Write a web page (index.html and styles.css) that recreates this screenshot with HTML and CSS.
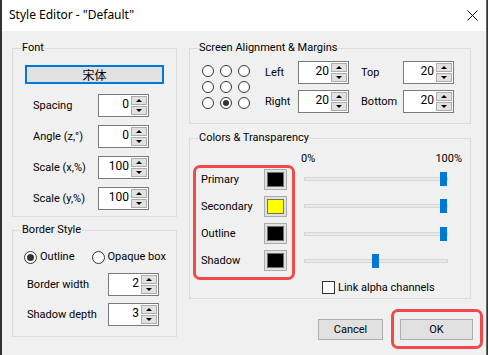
FILE: index.html
```html
<!DOCTYPE html>
<html lang="en">
<head>
  <meta charset="UTF-8">
  <title>Style Editor</title>
  <link rel="stylesheet" href="styles.css">
</head>
<body>
  <div class="window">
    <!-- Title bar -->
    <div class="titlebar">
      <span class="title">Style Editor - "Default"</span>
      <svg class="close" width="11" height="11" viewBox="0 0 11 11">
        <path d="M0.5 0.5 L10.5 10.5 M10.5 0.5 L0.5 10.5" stroke="#000" stroke-width="1" fill="none"/>
      </svg>
    </div>

    <div class="client">
      <!-- Left column -->
      <div class="col-left">
        <fieldset class="group font-group">
          <legend>Font</legend>
          <div class="group-body">
            <button class="font-btn">宋体</button>
            <div class="rows">
              <div class="row"><span class="lbl">Spacing</span><div class="spin"><span class="val">0</span><div class="arrows"><span class="up"></span><span class="down"></span></div></div></div>
              <div class="row"><span class="lbl">Angle (z,°)</span><div class="spin"><span class="val">0</span><div class="arrows"><span class="up"></span><span class="down"></span></div></div></div>
              <div class="row"><span class="lbl">Scale (x,%)</span><div class="spin"><span class="val">100</span><div class="arrows"><span class="up"></span><span class="down"></span></div></div></div>
              <div class="row"><span class="lbl">Scale (y,%)</span><div class="spin"><span class="val">100</span><div class="arrows"><span class="up"></span><span class="down"></span></div></div></div>
            </div>
          </div>
        </fieldset>

        <fieldset class="group border-group">
          <legend>Border Style</legend>
          <div class="group-body">
            <div class="radio-row">
              <span class="radio checked"></span><span class="radio-text">Outline</span>
              <span class="radio"></span><span class="radio-text">Opaque box</span>
            </div>
            <div class="rows">
              <div class="row"><span class="lbl">Border width</span><div class="spin"><span class="val">2</span><div class="arrows"><span class="up"></span><span class="down"></span></div></div></div>
              <div class="row"><span class="lbl">Shadow depth</span><div class="spin"><span class="val">3</span><div class="arrows"><span class="up"></span><span class="down"></span></div></div></div>
            </div>
          </div>
        </fieldset>
      </div>

      <!-- Right column -->
      <div class="col-right">
        <fieldset class="group align-group">
          <legend>Screen Alignment &amp; Margins</legend>
          <div class="group-body align-body">
            <div class="pos-grid">
              <span class="radio"></span><span class="radio"></span><span class="radio"></span>
              <span class="radio"></span><span class="radio"></span><span class="radio"></span>
              <span class="radio"></span><span class="radio checked"></span><span class="radio"></span>
            </div>
            <div class="margins">
              <span class="lbl">Left</span>
              <div class="spin"><span class="val">20</span><div class="arrows"><span class="up"></span><span class="down"></span></div></div>
              <span class="lbl">Top</span>
              <div class="spin"><span class="val">20</span><div class="arrows"><span class="up"></span><span class="down"></span></div></div>
              <span class="lbl">Right</span>
              <div class="spin"><span class="val">20</span><div class="arrows"><span class="up"></span><span class="down"></span></div></div>
              <span class="lbl">Bottom</span>
              <div class="spin"><span class="val">20</span><div class="arrows"><span class="up"></span><span class="down"></span></div></div>
            </div>
          </div>
        </fieldset>

        <fieldset class="group colors-group">
          <legend>Colors &amp; Transparency</legend>
          <div class="group-body">
            <div class="pct"><span>0%</span><span>100%</span></div>
            <div class="colors-body">
              <div class="highlight color-list">
                <div class="color-row"><span>Primary</span><button class="swatch"><span class="fill black"></span></button></div>
                <div class="color-row"><span>Secondary</span><button class="swatch"><span class="fill yellow"></span></button></div>
                <div class="color-row"><span>Outline</span><button class="swatch"><span class="fill black"></span></button></div>
                <div class="color-row"><span>Shadow</span><button class="swatch"><span class="fill black"></span></button></div>
              </div>
              <div class="sliders">
                <div class="slider"><span class="track"></span><span class="thumb" style="left: 136px"></span></div>
                <div class="slider"><span class="track"></span><span class="thumb" style="left: 136px"></span></div>
                <div class="slider"><span class="track"></span><span class="thumb" style="left: 136px"></span></div>
                <div class="slider"><span class="track"></span><span class="thumb" style="left: 68px"></span></div>
              </div>
            </div>
            <div class="link-row"><span class="check"></span><span>Link alpha channels</span></div>
          </div>
        </fieldset>

        <div class="buttons">
          <button class="btn cancel">Cancel</button>
          <div class="highlight ok-wrap"><button class="btn ok">OK</button></div>
        </div>
      </div>
    </div>
  </div>
</body>
</html>
```

FILE: styles.css
```css
* {
  margin: 0;
  padding: 0;
  box-sizing: border-box;
}

body {
  background-color: #2f3336;
  font-family: Roboto, "Noto Sans CJK SC", sans-serif;
  font-size: 11px;
  color: #000;
  width: 488px;
  height: 355px;
  overflow: hidden;
}

.window {
  margin-left: 2px;
  width: 485px;
  height: 355px;
  border-right: 1px solid #6a6a6a;
  background-color: #f0f0f0;
}

.titlebar {
  height: 31px;
  background-color: #fff;
  display: flex;
  align-items: center;
  justify-content: space-between;
  padding: 0 8px 0 7px;
}

.title {
  font-family: "Noto Sans", sans-serif;
  font-size: 12px;
  line-height: 16px;
  margin-top: -1px;
}

.close {
  margin-top: -1px;
}

.client {
  display: flex;
  gap: 12px;
  padding: 9px 0 0 10px;
}

.col-left {
  width: 165px;
  display: flex;
  flex-direction: column;
  gap: 5px;
}

.col-right {
  flex: 1;
  display: flex;
  flex-direction: column;
}

/* Group boxes */
.group {
  border: 1px solid #dcdcdc;
  min-width: 0;
}

.group legend {
  margin-left: 8px;
  padding: 0 1px;
  line-height: 16px;
}

.font-group .group-body {
  padding: 9px 12px 6px 12px;
}

.font-btn {
  display: block;
  width: 100%;
  height: 19px;
  border: 2px solid #0078d7;
  background-color: #e1e1e1;
  font-family: "Noto Sans CJK SC", sans-serif;
  font-size: 12px;
  line-height: 14px;
}

.rows {
  display: flex;
  flex-direction: column;
}

.font-group .rows {
  margin-top: 10px;
  padding-left: 8px;
  padding-right: 15px;
  gap: 8px;
}

.row {
  display: flex;
  align-items: center;
  justify-content: space-between;
}

/* Spin boxes */
.spin {
  width: 51px;
  height: 23px;
  display: flex;
  flex-shrink: 0;
  background-color: #fff;
  border: 1px solid #7a7a7a;
}

.spin .val {
  flex: 1;
  text-align: right;
  padding-right: 2px;
  font-size: 12px;
  line-height: 19px;
}

.arrows {
  width: 17px;
  display: flex;
  flex-direction: column;
  gap: 1px;
  padding: 1px 1px 1px 0;
}

.arrows span {
  flex: 1;
  background-color: #e1e1e1;
  border: 1px solid #adadad;
  display: flex;
  align-items: center;
  justify-content: center;
}

.arrows .up::after,
.arrows .down::after {
  content: '';
  border-left: 3px solid transparent;
  border-right: 3px solid transparent;
}

.arrows .up::after {
  border-bottom: 3px solid #000;
}

.arrows .down::after {
  border-top: 3px solid #000;
}

/* Radio / checkbox */
.radio {
  width: 13px;
  height: 13px;
  flex-shrink: 0;
  border: 1px solid #333;
  border-radius: 50%;
  background-color: #fff;
  display: flex;
  align-items: center;
  justify-content: center;
}

.radio.checked::after {
  content: '';
  width: 7px;
  height: 7px;
  border-radius: 50%;
  background-color: #333;
}

.check {
  width: 13px;
  height: 13px;
  border: 1px solid #333;
  background-color: #fff;
}

.border-group {
  height: 115px;
}

.border-group .group-body {
  padding: 11px 0 0 11px;
}

.radio-row {
  display: flex;
  align-items: center;
  line-height: 16px;
  white-space: nowrap;
}

.radio-text {
  margin-left: 3px;
  margin-right: 17px;
}

.border-group .rows {
  margin-top: 8px;
  padding-left: 3px;
  padding-right: 17px;
  gap: 7px;
}

/* Screen alignment */
.align-group {
  width: 282px;
}

.align-body {
  display: flex;
  align-items: center;
  padding: 5px 0 10px 12px;
}

.pos-grid {
  display: grid;
  grid-template-columns: repeat(3, 12px);
  grid-auto-rows: 12px;
  column-gap: 6px;
  row-gap: 4px;
}

.pos-grid .radio {
  width: 12px;
  height: 12px;
}

.pos-grid .radio.checked::after {
  width: 6px;
  height: 6px;
}

.margins {
  margin-left: 15px;
  display: grid;
  grid-template-columns: 33px 63px 42px 51px;
  row-gap: 6px;
  align-items: center;
}

/* Colors */
.colors-group {
  width: 282px;
  height: 169px;
  margin-top: 6px;
}

.colors-group .group-body {
  padding: 6px 0 0 3px;
}

.pct {
  display: flex;
  justify-content: space-between;
  width: 161px;
  margin-left: 108px;
  line-height: 14px;
}

.colors-body {
  display: flex;
  gap: 9px;
  margin-top: -1px;
}

.highlight {
  border: 3px solid #ef4b4b;
  border-radius: 7px;
}

.color-list {
  width: 102px;
  padding: 0 5px 5px 5px;
  display: flex;
  flex-direction: column;
  gap: 5.33px;
}

.color-row {
  height: 22px;
  display: flex;
  align-items: center;
  justify-content: space-between;
}

.swatch {
  width: 23px;
  height: 21px;
  border: 1px solid #adadad;
  background-color: #e1e1e1;
  padding: 2px;
  display: flex;
}

.swatch .fill {
  flex: 1;
  border: 1px solid #707070;
}

.fill.black {
  background-color: #000;
}

.fill.yellow {
  background-color: #ffff00;
}

.sliders {
  width: 144px;
  padding-top: 3px;
  display: flex;
  flex-direction: column;
  gap: 5.33px;
}

.slider {
  height: 22px;
  position: relative;
  display: flex;
  align-items: center;
}

.track {
  width: 100%;
  height: 4px;
  background-color: #e7eaea;
  border: 1px solid #d6d6d6;
}

.thumb {
  position: absolute;
  top: 4px;
  width: 7px;
  height: 14px;
  background-color: #0078d7;
}

.link-row {
  display: flex;
  align-items: center;
  gap: 3px;
  margin-top: 1px;
  margin-left: 129px;
  line-height: 14px;
}

/* Dialog buttons */
.buttons {
  display: flex;
  align-items: center;
  justify-content: flex-end;
  gap: 8px;
  margin-top: 10px;
  padding-right: 3px;
}

.btn {
  height: 21px;
  border: 1px solid #adadad;
  background-color: #e1e1e1;
  font-family: Roboto, sans-serif;
  font-size: 11px;
}

.cancel {
  width: 65px;
}

.ok-wrap {
  padding: 7px 7px 6px 6px;
}

.ok {
  width: 73px;
}
```
